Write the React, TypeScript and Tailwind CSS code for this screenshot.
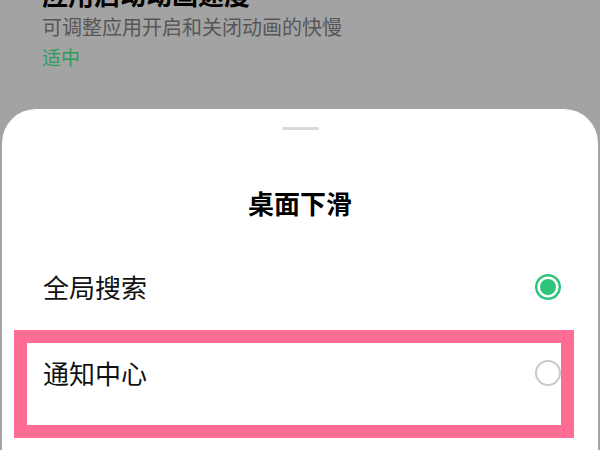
const options = [
  { label: "全局搜索", checked: true },
  { label: "通知中心", checked: false },
];

function Radio({ checked }: { checked: boolean }) {
  return (
    <svg width="26" height="26" viewBox="0 0 26 26" aria-hidden>
      {checked ? (
        <>
          <circle cx="13" cy="13" r="11.8" fill="none" stroke="#2ec47a" strokeWidth="2.4" />
          <circle cx="13" cy="13" r="8" fill="#2ec47a" />
        </>
      ) : (
        <circle cx="13" cy="13" r="12" fill="none" stroke="#c9c9c9" strokeWidth="2" />
      )}
    </svg>
  );
}

export default function App() {
  return (
    <div
      className="relative flex h-[450px] w-[600px] flex-col overflow-hidden bg-[#a3a3a3]"
      style={{ fontFamily: '"Noto Sans CJK SC", "Noto Sans", sans-serif' }}
    >
      {/* background settings page (dimmed) */}
      <div className="h-[109px] shrink-0 pl-[42px]">
        <h3 className="mt-[-19px] text-[26px] leading-[26px] font-bold text-black">应用启动动画速度</h3>
        <p className="mt-[10px] text-[20px] leading-[20px] text-[#575757]">可调整应用开启和关闭动画的快慢</p>
        <p className="mt-[10px] text-[19px] leading-[19px] text-[#2f9c5c]">适中</p>
      </div>

      {/* bottom sheet */}
      <div className="mx-[2px] flex flex-1 flex-col rounded-t-[34px] bg-white">
        <div className="mx-auto mt-[18px] h-[3px] w-[37px] rounded-full bg-[#dadada]" />
        <h2 className="mt-[60px] text-center text-[26px] leading-[26px] font-semibold text-black">桌面下滑</h2>
        <ul className="mt-[28px]">
          {options.map((o) => (
            <li key={o.label} className="flex h-[86px] items-center justify-between pr-[37px] pl-[41px]">
              <span className="text-[26px] leading-[26px] text-[#111]">{o.label}</span>
              <Radio checked={o.checked} />
            </li>
          ))}
        </ul>
      </div>

      {/* annotation highlight */}
      <div className="absolute top-[330px] left-[14px] h-[108px] w-[560px] border-[13px] border-[#fe6c94]" />
    </div>
  );
}
